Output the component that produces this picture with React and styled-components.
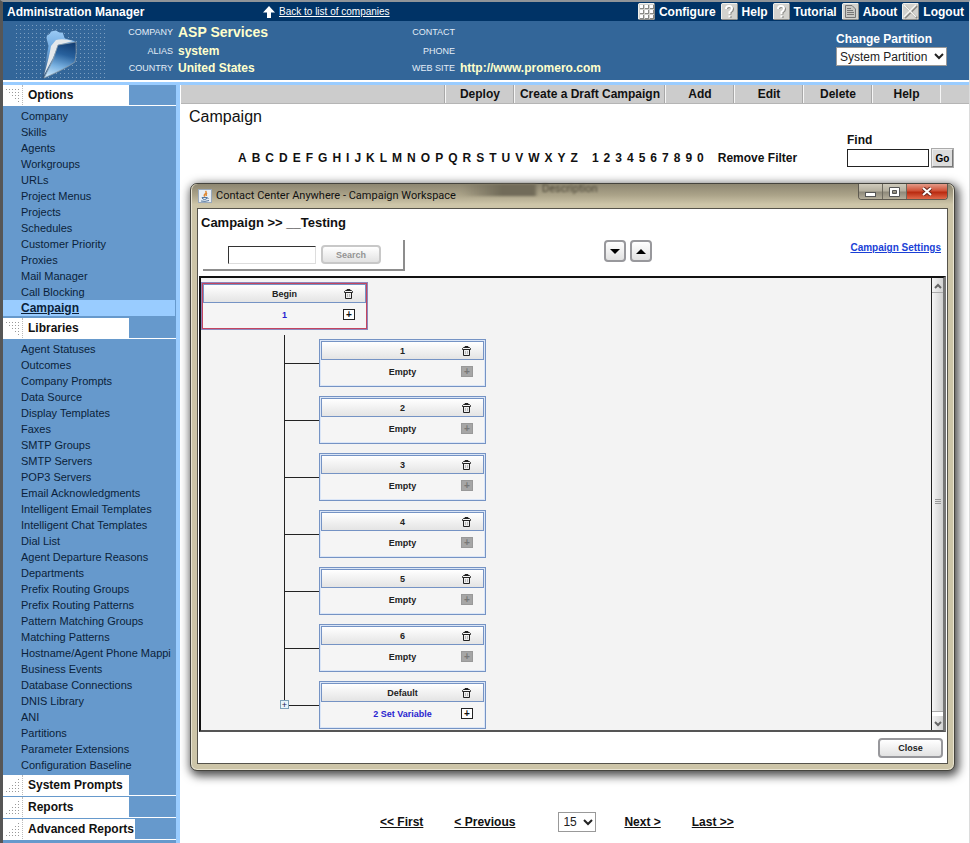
import React from 'react';
import styled, { createGlobalStyle, css } from 'styled-components';

const GlobalStyle = createGlobalStyle`
  * {
    box-sizing: border-box;
  }

  body {
    margin: 0;
    background: #fff;
    font-family: 'Liberation Sans', Arial, sans-serif;
    font-size: 12px;
    color: #111;
  }

  a {
    color: inherit;
    text-decoration: none;
  }

  button, input, select {
    font-family: inherit;
    margin: 0;
  }

  ul, ol {
    list-style: none;
    margin: 0;
    padding: 0;
  }
`;

const optionItems = [
  'Company', 'Skills', 'Agents', 'Workgroups', 'URLs', 'Project Menus', 'Projects',
  'Schedules', 'Customer Priority', 'Proxies', 'Mail Manager', 'Call Blocking', 'Campaign',
];

const libraryItems = [
  'Agent Statuses', 'Outcomes', 'Company Prompts', 'Data Source', 'Display Templates', 'Faxes',
  'SMTP Groups', 'SMTP Servers', 'POP3 Servers', 'Email Acknowledgments',
  'Intelligent Email Templates', 'Intelligent Chat Templates', 'Dial List',
  'Agent Departure Reasons', 'Departments', 'Prefix Routing Groups', 'Prefix Routing Patterns',
  'Pattern Matching Groups', 'Matching Patterns', 'Hostname/Agent Phone Mappi',
  'Business Events', 'Database Connections', 'DNIS Library', 'ANI', 'Partitions',
  'Parameter Extensions', 'Configuration Baseline',
];

const nodes = [
  { title: '1', text: 'Empty' },
  { title: '2', text: 'Empty' },
  { title: '3', text: 'Empty' },
  { title: '4', text: 'Empty' },
  { title: '5', text: 'Empty' },
  { title: '6', text: 'Empty' },
  { title: 'Default', text: '2 Set Variable', active: true },
];

const letters = 'ABCDEFGHIJKLMNOPQRSTUVWXYZ'.split('');
const digits = '1234567890'.split('');

/* ---------- icons ---------- */

const MenuIcon = ({ type }) => (
  <svg width="17" height="17" viewBox="0 0 17 17" aria-hidden="true">
    <rect width="17" height="17" rx="2" fill="#d2d2ce" />
    <path d="M0.500 16V1.500L1.500 0.500H16" fill="none" stroke="#f0f0ec" />
    <path d="M16.500 1V15.500L15.500 16.500H1" fill="none" stroke="#8c8c88" />
    {type === 'grid' && (
      <g>
        {[2, 7, 12].map((x) =>
          [2, 7, 12].map((y) => (
            <g key={`${x}-${y}`}>
              <rect x={x} y={y} width="4" height="4" fill="#8a8a86" />
              <rect x={x} y={y} width="3" height="3" fill="#fff" />
            </g>
          ))
        )}
      </g>
    )}
    {type === 'help' && (
      <g fill="none">
        <path d="M6 6Q6 4 9 4Q12 4 12 6.500Q12 8 9.500 9.500V11.500M9.500 13V15" stroke="#858581" strokeWidth="2" />
        <path d="M5 6Q5 3 8 3Q11 3 11 5.500Q11 7.500 8.500 9V11M8.500 12.500V14.500" stroke="#fff" strokeWidth="2" />
      </g>
    )}
    {type === 'page' && (
      <g>
        <path d="M3.500 2.500H10L13.500 6V14.500H3.500Z" fill="#c8c8c4" stroke="#777" />
        <path d="M5 5.500H9M5 7.500H11M5 9.500H12M5 11.500H12" stroke="#777" />
      </g>
    )}
    {type === 'close' && (
      <g>
        <path d="M3 3L15 15M15 3L3 15" stroke="#8a8a86" strokeWidth="2" />
        <path d="M2 2L14 14M14 2L2 14" stroke="#f6f6f2" strokeWidth="1.500" />
      </g>
    )}
  </svg>
);

const UpArrow = () => (
  <svg width="12" height="12" viewBox="0 0 12 12" aria-hidden="true">
    <path d="M6 0L12 6.500H8V12H4V6.500H0Z" fill="#fff" />
  </svg>
);

const FolderLogo = () => (
  <svg width="92" height="56" viewBox="0 0 92 56" aria-hidden="true">
    <defs>
      <pattern id="dots" width="4" height="4" patternUnits="userSpaceOnUse">
        <rect x="1" y="1" width="1" height="1" fill="#7d9fc1" />
      </pattern>
      <linearGradient id="front" x1="0.700" y1="0" x2="0.450" y2="1">
        <stop offset="0" stopColor="#123e74" />
        <stop offset="0.350" stopColor="#28619d" />
        <stop offset="0.700" stopColor="#78b0e0" />
        <stop offset="1" stopColor="#c3e2fa" />
      </linearGradient>
      <linearGradient id="back" x1="0" y1="0" x2="0" y2="1">
        <stop offset="0" stopColor="#9ccbf5" />
        <stop offset="0.400" stopColor="#6ba6de" />
        <stop offset="1" stopColor="#2c4f76" />
      </linearGradient>
    </defs>
    <rect width="92" height="56" fill="url(#dots)" />
    <path d="M31 14Q31 10 34 10L36 7L41 6Q44 9 48 8L50 14L61 17L43 30L29 54L27 55L33 22Z" fill="url(#back)" stroke="#345f8d" strokeWidth="0.800" />
    <path d="M36 22L41 16Q48 14 58 17L43 21L38 34L29 51Q34 34 36 22Z" fill="#e4e8eb" />
    <path d="M43 21L61 18Q62 29 60 38Q50 45 29 54L38 36Z" fill="url(#front)" stroke="#8c9aa6" strokeWidth="0.800" />
  </svg>
);

const Corner = ({ up }) => (
  <svg width="13" height="13" viewBox="0 0 13 13" aria-hidden="true">
    {[0, 1, 2, 3, 4].map((row) =>
      [0, 1, 2, 3, 4]
        .filter((col) => (up ? col >= 4 - row : col >= row))
        .map((col) => (
          <rect key={`${row}-${col}`} x={col * 3} y={row * 3} width="1" height="1" fill="#999" />
        ))
    )}
  </svg>
);

const TrashIcon = () => (
  <svg width="9" height="10" viewBox="0 0 9 10" aria-hidden="true">
    <path d="M3 1.500V0.500H6V1.500M0.500 3.500V2.500L1.500 1.500H7.500L8.500 2.500V3.500ZM1.500 3.500V9.500H7.500V3.500" fill="none" stroke="#222" />
    <path d="M3.500 5V8M5.500 5V8" stroke="#bbb" />
  </svg>
);

const JavaIcon = () => (
  <svg width="14" height="14" viewBox="0 0 14 14" aria-hidden="true">
    <rect x="0.500" y="0.500" width="13" height="13" fill="#e9eef4" stroke="#9aa9bb" />
    <path d="M7.500 2Q9 3.500 7 5Q5.500 6.500 7 7.500M9 4Q7.500 5 8.500 7" fill="none" stroke="#e08a35" strokeWidth="1.500" />
    <path d="M4 8.500H9Q9 10.500 6.500 10.500Q4.500 10.500 4 8.500ZM9.500 8.500Q11 9 9.500 10M3 12Q7 13 11 11.500" fill="none" stroke="#55789f" />
  </svg>
);

const Chevron = ({ up }) => (
  <svg width="8" height="6" viewBox="0 0 8 6" aria-hidden="true">
    <path d={up ? 'M1 5L4 2L7 5' : 'M1 1L4 4L7 1'} fill="none" stroke="#666" strokeWidth="2" />
  </svg>
);

/* ---------- page header ---------- */

const Page = styled.div`
  display: flex;
  flex-direction: column;
  min-height: 100vh;
  border-top: 2px solid #8f9499;
  border-left: 3px solid #565656;
  border-right: 1px solid #dcdcdc;
`;

const TopBar = styled.div`
  display: flex;
  align-items: center;
  height: 19px;
  padding: 0 5px 0 4px;
  background: #003366;
  color: #fff;
  font-weight: bold;
`;

const AppName = styled.span`
  width: 256px;
`;

const BackLink = styled.a`
  display: flex;
  align-items: center;
  gap: 4px;
  font-size: 10px;
  font-weight: normal;

  span {
    text-decoration: underline;
  }
`;

const TopMenu = styled.nav`
  display: flex;
  gap: 5px;
  margin-left: auto;

  a {
    display: flex;
    align-items: center;
    gap: 4px;
  }
`;

const Banner = styled.header`
  display: flex;
  height: 61px;
  padding-left: 12px;
  background: #336699;
  border-bottom: 2px solid #fff;
  color: #fff;
`;

const LogoBox = styled.div`
  padding-top: 3px;
  width: 104px;
`;

const Info = styled.dl`
  display: grid;
  grid-template-columns: 54px 1fr;
  grid-template-rows: 22px 16px 17px;
  align-items: center;
  column-gap: 5px;
  width: 282px;
  margin: 0;

  dt {
    font-size: 9px;
    text-align: right;
    color: #e3edf7;
    white-space: nowrap;
  }

  dd {
    margin: 0;
    font-weight: bold;
    color: #ffffcc;
  }
`;

const CompanyName = styled.dd`
  font-size: 14px;
`;

const Partition = styled.div`
  display: flex;
  flex-direction: column;
  gap: 1px;
  margin: 11px 22px 0 auto;

  label {
    font-weight: bold;
    line-height: 14px;
  }
`;

const Select = styled.select`
  height: 19px;
  padding: 0 18px 0 3px;
  border: 1px solid #999;
  border-radius: 0;
  appearance: none;
  font-size: 12px;
  color: #222;
  background: #fff
    url("data:image/svg+xml,%3Csvg xmlns='http://www.w3.org/2000/svg' width='10' height='7'%3E%3Cpath d='M1 1L5 5L9 1' fill='none' stroke='%23222' stroke-width='2'/%3E%3C/svg%3E")
    no-repeat right 2px center;
`;

const PageSize = styled(Select)`
  width: 38px;
  height: 20px;
  padding-left: 4px;
`;

/* ---------- sidebar ---------- */

const Body = styled.div`
  display: flex;
  flex: 1;
  border-top: 3px solid #99ccff;
`;

const Sidebar = styled.aside`
  flex: none;
  width: 177px;
  background: #6699cc;
  border-right: 4px solid #99ccff;
`;

const Section = styled.section`
  margin-bottom: 1px;
`;

const SectionHead = styled.h2`
  display: flex;
  margin: 0;
  border-bottom: 1px solid #fff;
  font-size: 12px;
  line-height: 20px;
  color: #111;

  a {
    display: flex;
    align-items: center;
    min-width: 126px;
    padding: 0 1px 0 3px;
    background: #fff;
  }

  span {
    margin-left: 3px;
    padding-left: 5px;
    border-left: 1px dotted #bbb;
  }
`;

const MenuList = styled.ul`
  padding: 2px 0 1px;
  font-size: 11px;
`;

const MenuItem = styled.li`
  margin-right: 1px;
  padding-left: 18px;
  line-height: 16px;
  white-space: nowrap;
  color: #0b1f3a;

  ${(props) =>
    props.$selected &&
    css`
      background: #99ccff;
      font-size: 12px;
      font-weight: bold;
      text-decoration: underline;
    `}
`;

/* ---------- content ---------- */

const Content = styled.main`
  flex: 1;
  min-width: 0;
  padding-left: 1px;
`;

const Toolbar = styled.div`
  display: flex;
  justify-content: flex-end;
  height: 19px;
  padding-right: 28px;
  background: #cccccc;
  border-bottom: 1px solid #b5b5b5;
`;

const ToolButton = styled.button`
  min-width: 69px;
  padding: 0 5px;
  border: 0;
  border-left: 1px solid #f6f6f6;
  box-shadow: -1px 0 0 #a8a8a8;
  background: none;
  font-size: 12px;
  font-weight: bold;
  color: #111;

  &:last-child {
    border-right: 1px solid #f6f6f6;
  }
`;

const Title = styled.h1`
  margin: 0;
  padding-left: 8px;
  font-size: 16px;
  font-weight: normal;
  line-height: 26px;
`;

const FilterRow = styled.div`
  display: flex;
  align-items: flex-end;
  padding: 2px 16px 16px 57px;
  line-height: 18px;
  font-weight: bold;
`;

const Alphabet = styled.div`
  display: flex;
  gap: 5px;
  margin-right: 14px;
`;

const Find = styled.form`
  display: flex;
  flex-direction: column;
  gap: 1px;
  margin-left: auto;

  label {
    line-height: 16px;
  }

  div {
    display: flex;
    gap: 3px;
  }

  input {
    width: 82px;
    height: 18px;
    border: 1px solid #222;
  }
`;

const GoButton = styled.button`
  width: 21px;
  padding: 0;
  border: 1px solid;
  border-color: #eee #777 #777 #eee;
  background: #dcdcdc;
  box-shadow: 0 0 0 1px #aaa;
  font-size: 10px;
  font-weight: bold;
`;

const Pager = styled.nav`
  display: flex;
  align-items: center;
  gap: 31px;
  padding: 41px 0 12px 199px;
  font-weight: bold;

  a {
    text-decoration: underline;
  }

  select {
    margin: 0 -3px 0 12px;
  }
`;

/* ---------- workspace window ---------- */

const Window = styled.section`
  margin: 0 14px 0 9px;
  padding: 0 6px 6px;
  border: 1px solid #45443e;
  border-radius: 7px;
  background: #cdc5a8;
  box-shadow: inset 0 0 0 1px #e9e4d2, 2px 3px 10px 2px rgba(0, 0, 0, 0.7);
`;

const TitleBar = styled.div`
  display: flex;
  align-items: flex-start;
  height: 24px;
  margin: 0 -5px;
  padding: 0 5px 0 6px;
  border-radius: 6px 6px 0 0;
  background: linear-gradient(#8d8671, #aaa288 45%, #cdc5a8 85%);
  font-family: Roboto, 'Open Sans', sans-serif;
  font-size: 11px;
  line-height: 24px;
  color: #111;

  > svg {
    margin: 5px 4px 0 0;
  }
`;

const Glass = styled.div`
  flex: 1;
  height: 12px;
  margin-left: 6px;
  padding-left: 80px;
  background: linear-gradient(90deg, transparent, #716b59 40px, #716b59 72px, transparent 76px);
  filter: blur(1px);
  line-height: 10px;
  color: #4d4838;
`;

const WindowButtons = styled.div`
  display: flex;
  height: 16px;
  border: 1px solid #5e5a50;
  border-top: 0;
  border-radius: 0 0 4px 4px;
  overflow: hidden;
`;

const WindowButton = styled.button`
  display: flex;
  align-items: center;
  justify-content: center;
  width: ${(props) => (props.$danger ? 40 : 24)}px;
  padding: 0;
  border: 0;
  border-right: ${(props) => (props.$danger ? '0' : '1px solid #6d695e')};
  background: ${(props) =>
    props.$danger
      ? 'linear-gradient(#e39a88, #cf5137 45%, #b92a10 55%, #e0694a)'
      : 'linear-gradient(#cfcabb, #b5b0a0 45%, #8f8a7b 55%, #b4ae9b)'};
`;

const WindowBody = styled.div`
  border: 1px solid #55534b;
  background: #fff;
`;

const Crumb = styled.h2`
  margin: 0;
  padding: 4px 3px 0;
  font-size: 13px;
  line-height: 20px;
`;

const SearchRow = styled.div`
  display: flex;
  align-items: flex-start;
  justify-content: space-between;
  padding: 7px 6px 5px 5px;
`;

const SearchBox = styled.form`
  display: flex;
  align-items: center;
  gap: 5px;
  width: 202px;
  height: 31px;
  padding-left: 25px;
  border-right: 2px solid #8d8d8d;
  border-bottom: 2px solid #8d8d8d;

  input {
    width: 88px;
    height: 18px;
    border: 1px solid #ddd;
    border-top-color: #333;
    border-left-color: #333;
  }
`;

const SoftButton = styled.button`
  width: ${(props) => props.$width}px;
  height: ${(props) => props.$height || 19}px;
  display: flex;
  align-items: center;
  justify-content: center;
  padding: 0;
  border: 2px solid ${(props) => (props.disabled ? '#c8c8c8' : '#98989c')};
  border-radius: 4px;
  background: linear-gradient(#fff, #e2e2e2);
  font-size: 9px;
  font-weight: bold;
  color: ${(props) => (props.disabled ? '#949494' : '#222')};
`;

const Arrows = styled.div`
  display: flex;
  gap: 4px;
`;

const SettingsLink = styled.a`
  font-size: 10px;
  font-weight: bold;
  line-height: 16px;
  color: #1a3fd6;
  text-decoration: underline;
`;

const CanvasFrame = styled.div`
  display: flex;
  margin: 0 1px;
  border-top: 2px solid #111;
  border-bottom: 2px solid #555;
  border-left: 2px solid #111;
  border-right: 3px solid #777;
  background: #f3f3f3;
`;

const Canvas = styled.div`
  flex: 1;
  padding: 4px 0 1px;
`;

const ScrollTrack = styled.div`
  display: flex;
  flex-direction: column;
  width: 12px;
  border-left: 1px solid #222;
  background: #fff;

  button {
    height: 14px;
    padding: 0;
    border: 0;
    background: linear-gradient(90deg, #f4f4f4, #d2d2d2);
    line-height: 6px;
  }
`;

const ScrollThumb = styled.div`
  display: flex;
  align-items: center;
  justify-content: center;
  flex: 1;
  margin-bottom: 4px;
  border-top: 1px solid #aaa;
  border-bottom: 1px solid #aaa;
  background: linear-gradient(90deg, #f6f6f6, #cfcfcf);
`;

const NodeCard = styled.div`
  width: 167px;
  height: 48px;
  padding: 1px;
  border: 1px solid #7593c4;
  box-shadow: inset 0 0 0 1px #dbe6f7;
  background: #f5f5f5;
  font-size: 9px;
  font-weight: bold;
  color: #222;

  ${(props) =>
    props.$selected &&
    css`
      border: 2px solid #c4455f;
      outline: 1px solid #8d87bd;
      outline-offset: -1px;
      padding: 0;
      box-shadow: none;
    `}
`;

const NodeLine = styled.div`
  display: grid;
  grid-template-columns: 34px 1fr 34px;
  align-items: center;
  height: ${(props) => (props.$head ? 19 : 23)}px;
  text-align: center;

  ${(props) =>
    props.$head &&
    css`
      grid-template-columns: 33px 1fr 33px;
      border: 1px solid #7593c4;
      background: linear-gradient(#fff, #e4e4e4);
    `}

  span {
    grid-column: 2;
  }

  a {
    grid-column: 2;
    color: #2a1fd0;
  }
`;

const IconButton = styled.button`
  display: flex;
  justify-content: center;
  padding: 0;
  border: 0;
  background: none;
`;

const PlusBox = styled.i`
  width: 12px;
  height: 11px;
  border: 1px solid ${(props) => (props.$off ? '#999' : '#222')};
  background: ${(props) => (props.$off ? '#a6a6a6' : '#fff')};
  color: ${(props) => (props.$off ? '#777' : '#111')};
  font-size: 10px;
  font-style: normal;
  font-weight: bold;
  line-height: 9px;
`;

const Branches = styled.ol`
  margin: 5px 0 0 83px;
`;

const Branch = styled.li`
  display: flex;
`;

const Connector = styled.div`
  position: relative;
  display: flex;
  flex-direction: column;
  width: 35px;

  &::before {
    content: '';
    height: ${(props) => (props.$first ? 28 : 33)}px;
    border-left: 1px solid #222;
    border-bottom: 1px solid #222;
  }

  &::after {
    content: '';
    flex: 1;
    border-left: ${(props) => (props.$last ? '0' : '1px solid #222')};
  }
`;

const BranchCard = styled.div`
  padding-top: ${(props) => (props.$first ? 4 : 9)}px;
`;

const Expander = styled.button`
  position: absolute;
  top: 28px;
  left: -4px;
  width: 9px;
  height: 9px;
  padding: 0;
  border: 1px solid #7da0b8;
  background: #e8f4fa;
  font-size: 9px;
  line-height: 6px;
  color: #225;
`;

const WindowFooter = styled.div`
  display: flex;
  justify-content: flex-end;
  padding: 6px 4px 5px;
`;

const Node = ({ title, text, active, selected }) => (
  <NodeCard $selected={selected}>
    <NodeLine $head>
      <span>{title}</span>
      <IconButton type="button" aria-label={`Delete ${title}`}>
        <TrashIcon />
      </IconButton>
    </NodeLine>
    <NodeLine>
      {active ? <a href="#node">{text}</a> : <span>{text}</span>}
      <IconButton type="button" aria-label={`Expand ${title}`} disabled={!active}>
        <PlusBox $off={!active}>+</PlusBox>
      </IconButton>
    </NodeLine>
  </NodeCard>
);

const SideSection = ({ title, items, up, selected }) => (
  <Section>
    <SectionHead>
      <a href="#section">
        <Corner up={up} />
        <span>{title}</span>
      </a>
    </SectionHead>
    {items && (
      <MenuList>
        {items.map((item) => (
          <MenuItem key={item} $selected={item === selected}>
            <a href="#item">{item}</a>
          </MenuItem>
        ))}
      </MenuList>
    )}
  </Section>
);

const CampaignWindow = () => (
  <Window>
    <TitleBar>
      <JavaIcon />
      <span>Contact Center Anywhere - Campaign Workspace</span>
      <Glass>Description</Glass>
      <WindowButtons>
        <WindowButton type="button" aria-label="Minimize">
          <svg width="11" height="11" viewBox="0 0 11 11">
            <rect x="0.500" y="6.500" width="10" height="4" fill="#fff" stroke="#555" />
          </svg>
        </WindowButton>
        <WindowButton type="button" aria-label="Maximize">
          <svg width="11" height="10" viewBox="0 0 11 10">
            <path d="M0.500 0.500H10.500V9.500H0.500ZM3.500 3.500V6.500H7.500V3.500Z" fill="#fff" fillRule="evenodd" stroke="#555" />
          </svg>
        </WindowButton>
        <WindowButton type="button" aria-label="Close window" $danger>
          <svg width="10" height="9" viewBox="0 0 10 9">
            <path d="M1 1L9 8M9 1L1 8" stroke="#6b2a20" strokeWidth="4" />
            <path d="M1 1L9 8M9 1L1 8" stroke="#fff" strokeWidth="2" />
          </svg>
        </WindowButton>
      </WindowButtons>
    </TitleBar>
    <WindowBody>
      <Crumb>Campaign &gt;&gt; __Testing</Crumb>
      <SearchRow>
        <SearchBox>
          <input type="text" aria-label="Search campaign" />
          <SoftButton type="button" $width={60} disabled>Search</SoftButton>
        </SearchBox>
        <Arrows>
          <SoftButton type="button" $width={22} $height={22} aria-label="Next match">
            <svg width="10" height="5" viewBox="0 0 10 5"><path d="M0 0H10L5 5Z" fill="#000" /></svg>
          </SoftButton>
          <SoftButton type="button" $width={22} $height={22} aria-label="Previous match">
            <svg width="10" height="5" viewBox="0 0 10 5"><path d="M0 5H10L5 0Z" fill="#000" /></svg>
          </SoftButton>
        </Arrows>
        <SettingsLink href="#settings">Campaign Settings</SettingsLink>
      </SearchRow>
      <CanvasFrame>
        <Canvas>
          <Node title="Begin" text="1" active selected />
          <Branches>
            {nodes.map((node, i) => {
              const last = i === nodes.length - 1;
              return (
                <Branch key={node.title}>
                  <Connector $first={i === 0} $last={last}>
                    {last && <Expander type="button" aria-label="Expand branch">+</Expander>}
                  </Connector>
                  <BranchCard $first={i === 0}>
                    <Node {...node} />
                  </BranchCard>
                </Branch>
              );
            })}
          </Branches>
        </Canvas>
        <ScrollTrack>
          <button type="button" aria-label="Scroll up"><Chevron up /></button>
          <ScrollThumb>
            <svg width="6" height="6" viewBox="0 0 6 6">
              <path d="M0 0.500H6M0 2.500H6M0 4.500H6" stroke="#999" />
            </svg>
          </ScrollThumb>
          <button type="button" aria-label="Scroll down"><Chevron /></button>
        </ScrollTrack>
      </CanvasFrame>
      <WindowFooter>
        <SoftButton type="button" $width={65} $height={20}>Close</SoftButton>
      </WindowFooter>
    </WindowBody>
  </Window>
);

const App = () => {
  return (
    <Page>
      <GlobalStyle />
      <TopBar>
        <AppName>Administration Manager</AppName>
        <BackLink href="#companies">
          <UpArrow />
          <span>Back to list of companies</span>
        </BackLink>
        <TopMenu>
          <a href="#configure"><MenuIcon type="grid" />Configure</a>
          <a href="#help"><MenuIcon type="help" />Help</a>
          <a href="#tutorial"><MenuIcon type="help" />Tutorial</a>
          <a href="#about"><MenuIcon type="page" />About</a>
          <a href="#logout"><MenuIcon type="close" />Logout</a>
        </TopMenu>
      </TopBar>
      <Banner>
        <LogoBox>
          <FolderLogo />
        </LogoBox>
        <Info>
          <dt>COMPANY</dt>
          <CompanyName>ASP Services</CompanyName>
          <dt>ALIAS</dt>
          <dd>system</dd>
          <dt>COUNTRY</dt>
          <dd>United States</dd>
        </Info>
        <Info>
          <dt>CONTACT</dt>
          <dd />
          <dt>PHONE</dt>
          <dd />
          <dt>WEB SITE</dt>
          <dd>http://www.promero.com</dd>
        </Info>
        <Partition>
          <label htmlFor="partition">Change Partition</label>
          <Select id="partition">
            <option>System Partition</option>
          </Select>
        </Partition>
      </Banner>
      <Body>
        <Sidebar>
          <SideSection title="Options" items={optionItems} selected="Campaign" />
          <SideSection title="Libraries" items={libraryItems} />
          <SideSection title="System Prompts" up />
          <SideSection title="Reports" up />
          <SideSection title="Advanced Reports" up />
        </Sidebar>
        <Content>
          <Toolbar>
            <ToolButton type="button">Deploy</ToolButton>
            <ToolButton type="button">Create a Draft Campaign</ToolButton>
            <ToolButton type="button">Add</ToolButton>
            <ToolButton type="button">Edit</ToolButton>
            <ToolButton type="button">Delete</ToolButton>
            <ToolButton type="button">Help</ToolButton>
          </Toolbar>
          <Title>Campaign</Title>
          <FilterRow>
            <Alphabet>
              {letters.map((letter) => <a href="#filter" key={letter}>{letter}</a>)}
            </Alphabet>
            <Alphabet>
              {digits.map((digit) => <a href="#filter" key={digit}>{digit}</a>)}
            </Alphabet>
            <a href="#clear">Remove Filter</a>
            <Find>
              <label htmlFor="find">Find</label>
              <div>
                <input id="find" type="text" />
                <GoButton type="button">Go</GoButton>
              </div>
            </Find>
          </FilterRow>
          <CampaignWindow />
          <Pager>
            <a href="#first">&lt;&lt; First</a>
            <a href="#previous">&lt; Previous</a>
            <PageSize aria-label="Rows per page">
              <option>15</option>
            </PageSize>
            <a href="#next">Next &gt;</a>
            <a href="#last">Last &gt;&gt;</a>
          </Pager>
        </Content>
      </Body>
    </Page>
  );
};

export default App;
